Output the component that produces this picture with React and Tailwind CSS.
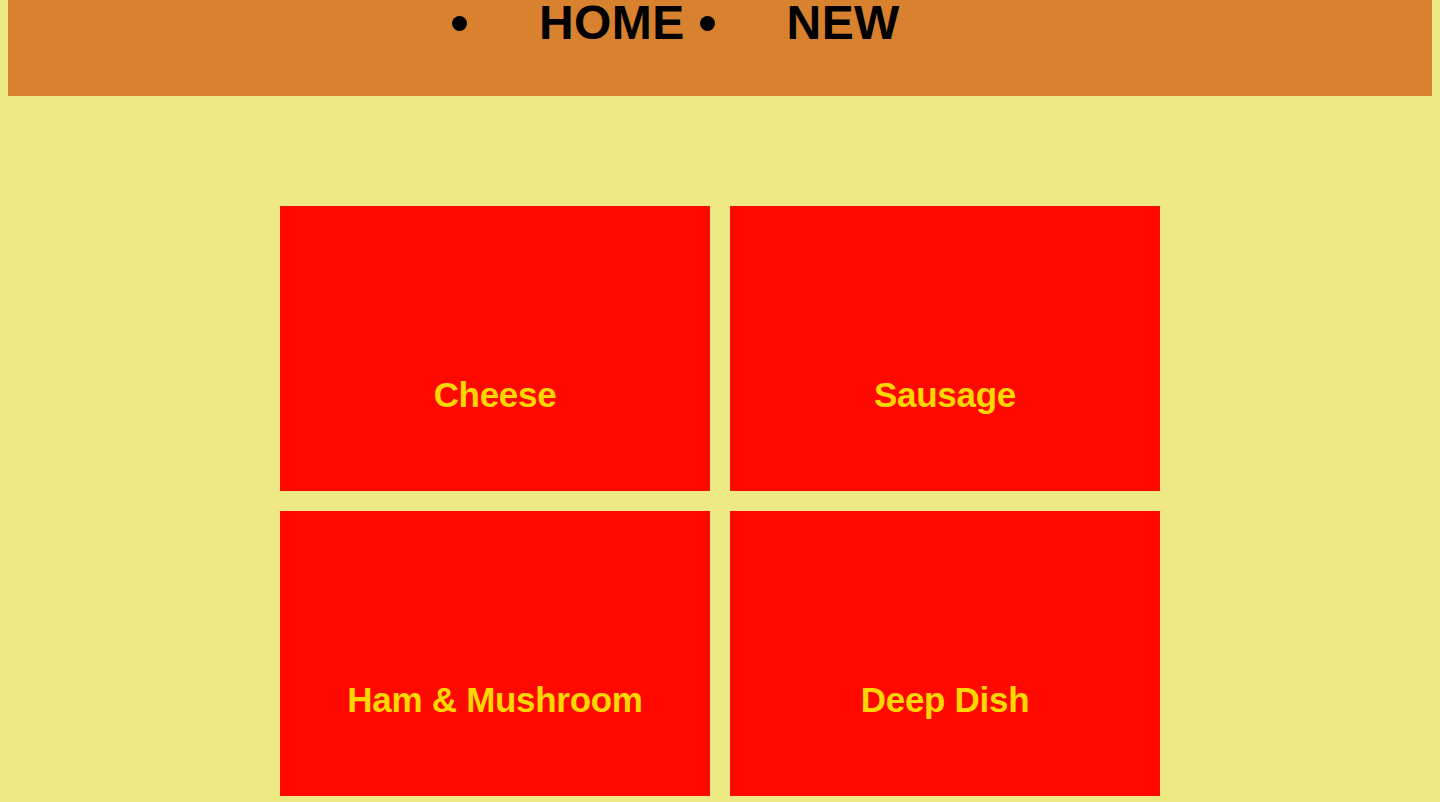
const pizzas = ['Cheese', 'Sausage', 'Ham & Mushroom', 'Deep Dish'];

const navItems = ['HOME', 'NEW'];

export default function App() {
  return (
    <div
      className="min-h-[802px] bg-[#EEE985] px-2"
      style={{ fontFamily: '"Liberation Sans", Arial, sans-serif' }}
    >
      {/* Header */}
      <header className="h-[96px] bg-[#D8822F]">
        <ul className="flex pl-[444px]">
          {navItems.map((item) => (
            <li key={item} className="flex items-start mr-[15px]">
              <span className="mt-[16px] mr-[72px] block h-[15px] w-[15px] rounded-full bg-black" />
              <span className="text-[48px] leading-[46px] font-bold text-black tracking-[0.4px]">
                {item}
              </span>
            </li>
          ))}
        </ul>
      </header>

      {/* Pizza grid */}
      <main className="pt-[110px] flex justify-center">
        <div className="grid grid-cols-[430px_430px] gap-[20px]">
          {pizzas.map((name) => (
            <div
              key={name}
              className="h-[285px] bg-[#FF0800] flex flex-col justify-end items-center pb-[76px]"
            >
              <span className="text-[35px] font-bold text-[#FFD700] leading-[40px] tracking-[-0.3px]">
                {name}
              </span>
            </div>
          ))}
        </div>
      </main>
    </div>
  );
}
